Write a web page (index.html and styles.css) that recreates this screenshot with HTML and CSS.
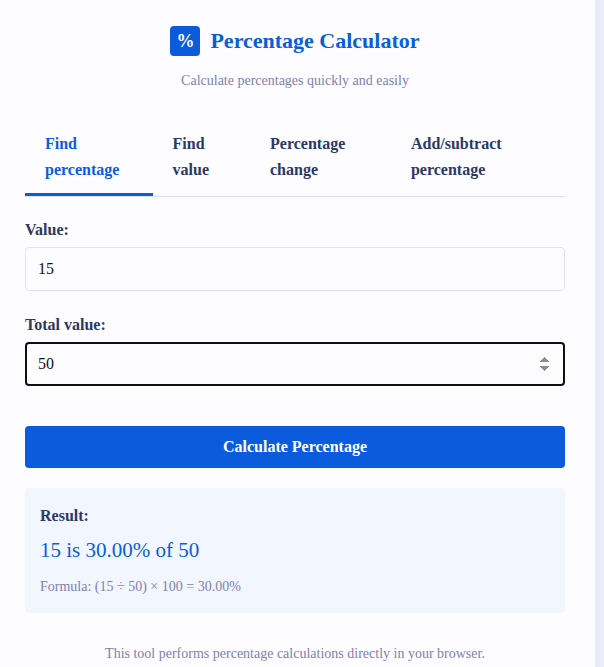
FILE: index.html
```html
<!DOCTYPE html>
<html lang="en">
<head>
    <meta charset="UTF-8">
    <meta name="viewport" content="width=device-width, initial-scale=1.0">
    <title>Percentage Calculator</title>
    <link rel="stylesheet" href="styles.css">
</head>
<body>

<div class="container">
    <header class="header">
        <h1 class="title"><span class="logo">%</span>Percentage Calculator</h1>
        <p class="subtitle">Calculate percentages quickly and easily</p>
    </header>

    <!-- Tabs -->
    <nav class="tabs">
        <button type="button" class="tab active">Find percentage</button>
        <button type="button" class="tab">Find value</button>
        <button type="button" class="tab">Percentage change</button>
        <button type="button" class="tab">Add/subtract percentage</button>
    </nav>

    <!-- Calculator Form -->
    <form id="calc-form">
        <div class="form-group">
            <label for="value">Value:</label>
            <input type="number" id="value" value="15">
        </div>
        <div class="form-group">
            <label for="total">Total value:</label>
            <input type="number" id="total" value="50" autofocus>
        </div>
        <button type="submit" class="calc-btn">Calculate Percentage</button>
    </form>

    <!-- Result -->
    <div class="result">
        <h2>Result:</h2>
        <p class="result-value" id="result-value">15 is 30.00% of 50</p>
        <p class="formula" id="formula">Formula: (15 ÷ 50) × 100 = 30.00%</p>
    </div>

    <footer class="footer">This tool performs percentage calculations directly in your browser.</footer>
</div>

<script src="script.js"></script>
</body>
</html>
```
FILE: styles.css
```css
/* General Styling */
* {
    box-sizing: border-box;
    margin: 0;
    padding: 0;
    font-family: "Liberation Serif", "Times New Roman", serif;
}

body {
    background: #ebebfa;
    color: #2c3866;
    font-size: 16px;
    line-height: 26px;
    padding-right: 9px;
}

.container {
    background: #fdfdff;
    min-height: 100vh;
    padding: 20px 30px 0 25px;
}

.header {
    text-align: center;
    margin-bottom: 29px;
}

.title {
    display: flex;
    justify-content: center;
    align-items: center;
    gap: 10px;
    color: #0860d8;
    font-size: 22px;
    line-height: 42px;
    margin-bottom: 8px;
}

.logo {
    width: 30px;
    height: 30px;
    border-radius: 4px;
    background: #0a5cdc;
    color: white;
    font-size: 18px;
    line-height: 30px;
}

.subtitle,
.formula,
.footer {
    color: #8080b0;
    font-size: 14px;
    line-height: 22px;
}

/* Tabs */
.tabs {
    display: flex;
    border-bottom: 1px solid #dfdff8;
    margin-bottom: 20px;
}

.tab {
    padding: 10px 20px;
    border: none;
    border-bottom: 3px solid transparent;
    background: none;
    color: #2c3866;
    font-size: 16px;
    font-weight: bold;
    line-height: 26px;
    text-align: left;
    cursor: pointer;
}

.tab.active {
    color: #0860d8;
    border-bottom-color: #0a5cdc;
}

/* Form */
.form-group {
    margin-bottom: 21px;
}

label {
    display: block;
    font-weight: bold;
    margin-bottom: 4px;
}

input {
    display: block;
    width: 100%;
    height: 44px;
    padding: 12px;
    border: 1px solid #dfdff8;
    border-radius: 4px;
    background: #fdfdff;
    color: #101020;
    font-size: 16px;
}

input:focus {
    border: 2px solid #101010;
    padding: 11px;
    outline: none;
}

.calc-btn {
    width: 100%;
    height: 42px;
    margin: 19px 0 20px;
    border: none;
    border-radius: 4px;
    background: #0a5cdc;
    color: white;
    font-size: 16px;
    font-weight: bold;
    cursor: pointer;
}

/* Result */
.result {
    padding: 15px;
    border-radius: 4px;
    background: #f2f6ff;
    margin-bottom: 30px;
}

.result h2 {
    font-size: 16px;
    margin-bottom: 5px;
}

.result-value {
    color: #0860d8;
    font-size: 21px;
    line-height: 32px;
    margin-bottom: 10px;
}

.footer {
    text-align: center;
}
```
FILE: script.js
```javascript
document.getElementById("total").focus();

// Show the share of the total as a percentage
document.getElementById("calc-form").addEventListener("submit", function (e) {
    e.preventDefault();
    const value = parseFloat(document.getElementById("value").value);
    const total = parseFloat(document.getElementById("total").value);
    if (isNaN(value) || isNaN(total) || total === 0) {
        alert("Please enter valid numbers.");
        return;
    }

    const percent = (value / total * 100).toFixed(2);
    document.getElementById("result-value").innerText = value + " is " + percent + "% of " + total;
    document.getElementById("formula").innerText = "Formula: (" + value + " ÷ " + total + ") × 100 = " + percent + "%";
});
```
